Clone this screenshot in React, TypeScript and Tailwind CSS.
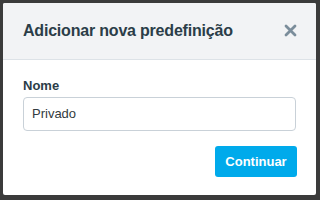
import React from "react";

export default function App() {
  return (
    <div className="w-[320px] h-[200px] bg-[#3b3b3b] pt-[3px] pl-[3px] font-['Helvetica','Liberation_Sans',sans-serif]">
      <div className="w-[313px] h-[192px] bg-white rounded-[2px] overflow-hidden flex flex-col">
        <div className="h-[57px] bg-[#f2f3f5] border-b border-[#dde2e7] flex items-center justify-between pl-[20px] pr-[19px]">
          <h1 className="text-[16px] font-bold text-[#2b3d48] tracking-[-0.2px]">Adicionar nova predefinição</h1>
          <svg width="13" height="13" viewBox="0 0 13 13" className="mt-[-2px]">
            <path d="M2 2 L11 11 M11 2 L2 11" stroke="#7b8d9b" strokeWidth="2.8" strokeLinecap="round" />
          </svg>
        </div>
        <div className="flex flex-col px-[20px] pt-[18px]">
          <label className="text-[13px] font-bold text-[#2b3d48] leading-[16px]">Nome</label>
          <div className="mt-[3px] h-[34px] border border-[#c9d1d8] rounded-[4px] flex items-center px-[8px] text-[13px] text-[#333b40]">
            Privado
          </div>
          <div className="flex justify-end mt-[15px] mr-[-1px]">
            <button className="h-[31px] w-[82px] bg-[#00aaeb] rounded-[3px] text-white text-[13px] font-bold">Continuar</button>
          </div>
        </div>
      </div>
    </div>
  );
}
